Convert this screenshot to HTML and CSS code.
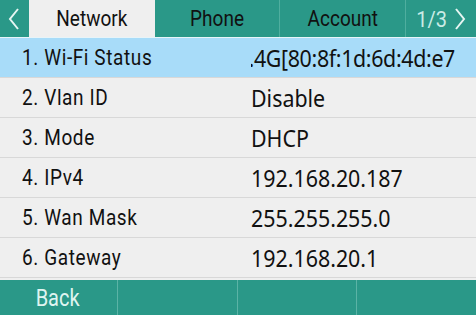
FILE: index.html
```html
<!DOCTYPE html>
<html lang="en">
<head>
    <meta charset="utf-8"/>
    <title>Network Status</title>
    <link rel="stylesheet" href="styles.css">
</head>
<body>
    <div class="screen">
        <div class="tabs">
            <div class="arrow">
                <svg width="14" height="24" viewBox="0 0 14 24"><path d="M11 2 L3 12 L11 22" fill="none" stroke="#e6f5f2" stroke-width="2"/></svg>
            </div>
            <div class="tab active"><span>Network</span></div>
            <div class="tab"><span>Phone</span></div>
            <div class="tab"><span>Account</span></div>
            <div class="tab page">
                <span>1/3</span>
                <svg width="14" height="24" viewBox="0 0 14 24"><path d="M3 2 L11 12 L3 22" fill="none" stroke="#e6f5f2" stroke-width="2"/></svg>
            </div>
        </div>
        <div class="list">
            <div class="row selected">
                <div class="label">1. Wi-Fi Status</div>
                <div class="value scroll"><span>2.4G[80:8f:1d:6d:4d:e7</span></div>
            </div>
            <div class="row">
                <div class="label">2. Vlan ID</div>
                <div class="value">Disable</div>
            </div>
            <div class="row">
                <div class="label">3. Mode</div>
                <div class="value">DHCP</div>
            </div>
            <div class="row">
                <div class="label">4. IPv4</div>
                <div class="value">192.168.20.187</div>
            </div>
            <div class="row">
                <div class="label">5. Wan Mask</div>
                <div class="value">255.255.255.0</div>
            </div>
            <div class="row">
                <div class="label">6. Gateway</div>
                <div class="value">192.168.20.1</div>
            </div>
        </div>
        <div class="softkeys">
            <div class="key"><span>Back</span></div>
            <div class="key"></div>
            <div class="key"></div>
            <div class="key"></div>
        </div>
    </div>
</body>
</html>
```

FILE: styles.css
```css
body {
    margin: 0;
    font-family: Roboto, "Liberation Sans", sans-serif;
    background-color: #efefef;
}

.screen {
    width: 476px;
    height: 315px;
    display: flex;
    flex-direction: column;
    overflow: hidden;
}

/* the panel stretches its text a little taller than wide */
.tab span,
.key span,
.label,
.value {
    display: inline-block;
    transform: scaleY(1.12);
}

.tabs {
    display: flex;
    height: 37px;
    background-color: #2a9888;
    border-bottom: 1px solid #e8f4f8;
}

.arrow {
    width: 29px;
    display: flex;
    align-items: center;
    justify-content: center;
}

.tab {
    width: 126px;
    display: flex;
    align-items: center;
    justify-content: center;
    font-size: 19px;
    color: #111;
    border-right: 1px solid #4fae9f;
    box-sizing: border-box;
}

.tab.active {
    background-color: #efefef;
    border-right: none;
}

.tab.page {
    width: 70px;
    border-right: none;
    color: #c9ebe5;
    font-size: 20px;
    gap: 6px;
    justify-content: flex-start;
    padding-left: 10px;
}

.list {
    flex: 1;
}

.row {
    display: flex;
    align-items: center;
    height: 39px;
    border-bottom: 1px solid #d8d8d8;
}

.row.selected {
    background-color: #a8dcf9;
}

.label {
    width: 229px;
    padding-left: 22px;
    font-size: 19px;
    letter-spacing: 0.6px;
    color: #111;
}

.value {
    flex: 1;
    font-family: "Noto Sans", "Open Sans", sans-serif;
    font-size: 21.4px;
    color: #111;
}

.value.scroll {
    display: flex;
    justify-content: flex-end;
    overflow: hidden;
    white-space: nowrap;
    letter-spacing: -0.35px;
    margin-left: 0;
    margin-right: 21px;
}

.softkeys {
    display: flex;
    height: 35px;
    background-color: #2a9888;
}

.key {
    width: 120px;
    display: flex;
    align-items: center;
    justify-content: center;
    color: #dff4f0;
    font-size: 20px;
    border-right: 1px solid #5bb3a6;
    box-sizing: border-box;
}

.key span {
    transform: scaleY(1.16);
}

.key:first-child {
    width: 119px;
    padding-right: 2px;
}

.key:last-child {
    border-right: none;
}
```
